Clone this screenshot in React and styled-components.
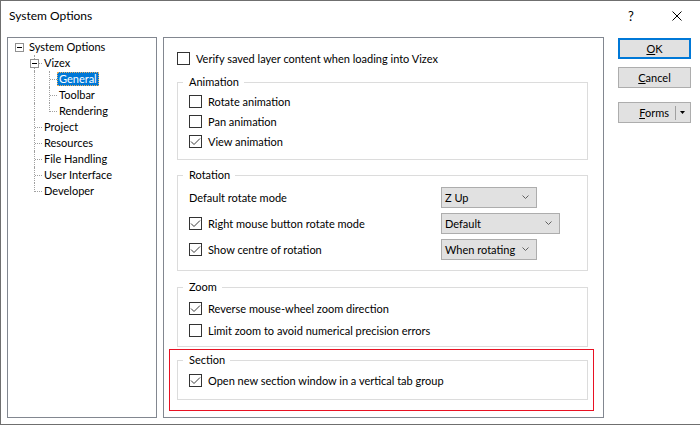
import React from 'react';
import styled, { createGlobalStyle, css } from 'styled-components';

const FONT = `Lato, "Liberation Sans", sans-serif`;

const Global = createGlobalStyle`
  html, body { margin: 0; padding: 0; background: #ffffff; }
  body { font-family: ${FONT}; font-size: 11px; color: #000; }
  * { box-sizing: border-box; }
`;

const Window = styled.div`
  width: 700px;
  height: 425px;
  background: #fff;
  border: 1px solid #6f6f6f;
  border-right: none;
  display: flex;
  flex-direction: column;
`;

const TitleBar = styled.div`
  height: 30px;
  display: flex;
  align-items: center;
  flex: 0 0 30px;
`;

const Title = styled.div`
  flex: 1;
  padding-left: 8px;
  font-size: 12px;
  line-height: 30px;
`;

const CaptionButton = styled.div`
  width: 46px;
  height: 30px;
  display: flex;
  align-items: center;
  justify-content: center;
  font-size: 13px;
`;

const Body = styled.div`
  flex: 1;
  display: flex;
  padding: 6px 0 6px 6px;
  min-height: 0;
`;

const TreePanel = styled.div`
  flex: 0 0 150px;
  border: 1px solid #828790;
  padding: 1px 0 0 4px;
  display: flex;
  flex-direction: column;
`;

const TreeRow = styled.div`
  height: 16px;
  display: flex;
  align-items: center;
`;

const Guide = styled.span`
  position: relative;
  flex: 0 0 15px;
  height: 16px;
  ${p => p.$v && css`
    &::before {
      content: '';
      position: absolute;
      left: 7px;
      top: 0;
      height: ${p.$v === 'full' ? 16 : 9}px;
      border-left: 1px dotted #a0a0a0;
    }
  `}
  ${p => p.$h && css`
    &::after {
      content: '';
      position: absolute;
      left: 8px;
      top: 8px;
      width: 7px;
      border-top: 1px dotted #a0a0a0;
    }
  `}
`;

const Expander = styled.span`
  position: absolute;
  z-index: 1;
  left: 3px;
  top: 4px;
  width: 9px;
  height: 9px;
  border: 1px solid #919191;
  background: #fff;
  &::after {
    content: '';
    position: absolute;
    left: 1px;
    top: 3px;
    width: 5px;
    height: 1px;
    background: #000;
  }
`;

const TreeLabel = styled.span`
  height: 14px;
  line-height: 12px;
  padding: 0 1px;
  border: 1px dotted transparent;
  white-space: nowrap;
  ${p => p.$selected && css`
    background: #0078d7;
    color: #fff;
    border-color: #e8b060;
  `}
`;

const MainPanel = styled.div`
  flex: 0 0 441px;
  margin-left: 6px;
  border: 1px solid #828790;
  padding: 10px 15px 0 13px;
  display: flex;
  flex-direction: column;
`;

const Row = styled.div`
  display: flex;
  align-items: center;
  height: ${p => p.$h || 20}px;
  white-space: nowrap;
`;

const Box = styled.span`
  flex: 0 0 13px;
  width: 13px;
  height: 13px;
  border: 1px solid #333;
  background: #fff;
  margin-right: 6px;
  display: flex;
  align-items: center;
  justify-content: center;
`;

const Group = styled.div`
  position: relative;
  border: 1px solid #dcdcdc;
  margin-top: ${p => p.$mt || 0}px;
  padding: ${p => p.$pt}px 10px ${p => p.$pb}px 11px;
`;

const Legend = styled.span`
  position: absolute;
  top: -9px;
  left: 5px;
  padding: 0 5px 0 6px;
  background: #fff;
  line-height: 16px;
`;

const Highlight = styled.div`
  border: 1px solid #e81123;
  margin: 2px -6px 0 -8px;
  padding: 10px 5px 10px 7px;
`;

const LabelCell = styled.div`
  flex: 0 0 252px;
  display: flex;
  align-items: center;
`;

const Select = styled.div`
  width: ${p => p.$w}px;
  height: 21px;
  border: 1px solid #adadad;
  background: #e1e1e1;
  display: flex;
  align-items: center;
  justify-content: space-between;
  padding: 0 7px 0 3px;
`;

const ButtonColumn = styled.div`
  margin-left: 14px;
  margin-top: 1px;
  display: flex;
  flex-direction: column;
  width: 73px;
`;

const Button = styled.div`
  height: 21px;
  margin-top: ${p => p.$mt || 0}px;
  background: #e1e1e1;
  border: ${p => (p.$default ? '2px solid #0078d7' : '1px solid #adadad')};
  display: flex;
  align-items: center;
  justify-content: center;
`;

const SplitButton = styled(Button)`
  justify-content: flex-end;
  padding-right: 5px;
`;

const Separator = styled.span`
  width: 1px;
  height: 14px;
  background: #a0a0a0;
  margin: 0 4px 0 6px;
`;

const Check = () => (
  <svg width="11" height="11" viewBox="0 0 11 11">
    <polyline points="1,5.5 4,8.5 10,2.5" fill="none" stroke="#3a3a3a" strokeWidth="1" />
  </svg>
);

const Checkbox = ({ checked }) => <Box>{checked && <Check />}</Box>;

const Chevron = () => (
  <svg width="7" height="5" viewBox="0 0 7 5">
    <polyline points="0.5,0.5 3.5,3.5 6.5,0.5" fill="none" stroke="#606060" strokeWidth="1" />
  </svg>
);

const CheckRow = ({ checked, children, h }) => (
  <Row $h={h}>
    <Checkbox checked={checked} />
    <span>{children}</span>
  </Row>
);

const tree = [
  { label: 'System Options', cols: [{ box: true }] },
  { label: 'Vizex', cols: [{}, { v: 'full', h: true, box: true }] },
  { label: 'General', selected: true, cols: [{}, { v: 'full' }, { v: 'full', h: true }] },
  { label: 'Toolbar', cols: [{}, { v: 'full' }, { v: 'full', h: true }] },
  { label: 'Rendering', cols: [{}, { v: 'full' }, { v: 'top', h: true }] },
  { label: 'Project', cols: [{}, { v: 'full', h: true }] },
  { label: 'Resources', cols: [{}, { v: 'full', h: true }] },
  { label: 'File Handling', cols: [{}, { v: 'full', h: true }] },
  { label: 'User Interface', cols: [{}, { v: 'full', h: true }] },
  { label: 'Developer', cols: [{}, { v: 'top', h: true }] },
];

export default function App() {
  return (
    <>
      <Global />
      <Window>
        <TitleBar>
          <Title>System Options</Title>
          <CaptionButton>?</CaptionButton>
          <CaptionButton>
            <svg width="10" height="10" viewBox="0 0 10 10">
              <path d="M0.5 0.5 L9.5 9.5 M9.5 0.5 L0.5 9.5" stroke="#000" strokeWidth="1" />
            </svg>
          </CaptionButton>
        </TitleBar>
        <Body>
          <TreePanel>
            {tree.map(item => (
              <TreeRow key={item.label}>
                {item.cols.map((c, i) => (
                  <Guide key={i} $v={c.v} $h={c.h}>
                    {c.box && <Expander />}
                  </Guide>
                ))}
                <TreeLabel $selected={item.selected}>{item.label}</TreeLabel>
              </TreeRow>
            ))}
          </TreePanel>

          <MainPanel>
            <CheckRow>Verify saved layer content when loading into Vizex</CheckRow>

            <Group $mt={14} $pt={8} $pb={8}>
              <Legend>Animation</Legend>
              <CheckRow>Rotate animation</CheckRow>
              <CheckRow>Pan animation</CheckRow>
              <CheckRow checked>View animation</CheckRow>
            </Group>

            <Group $mt={15} $pt={8} $pb={8}>
              <Legend>Rotation</Legend>
              <Row $h={26}>
                <LabelCell>Default rotate mode</LabelCell>
                <Select $w={96}><span>Z Up</span><Chevron /></Select>
              </Row>
              <Row $h={26}>
                <LabelCell><Checkbox checked /><span>Right mouse button rotate mode</span></LabelCell>
                <Select $w={119}><span>Default</span><Chevron /></Select>
              </Row>
              <Row $h={26}>
                <LabelCell><Checkbox checked /><span>Show centre of rotation</span></LabelCell>
                <Select $w={96}><span>When rotating</span><Chevron /></Select>
              </Row>
            </Group>

            <Group $mt={16} $pt={9} $pb={5}>
              <Legend>Zoom</Legend>
              <CheckRow checked h={22}>Reverse mouse-wheel zoom direction</CheckRow>
              <CheckRow h={22}>Limit zoom to avoid numerical precision errors</CheckRow>
            </Group>

            <Highlight>
              <Group $pt={9} $pb={9}>
                <Legend>Section</Legend>
                <CheckRow checked>Open new section window in a vertical tab group</CheckRow>
              </Group>
            </Highlight>
          </MainPanel>

          <ButtonColumn>
            <Button $default><span><u>O</u>K</span></Button>
            <Button $mt={8}><span><u>C</u>ancel</span></Button>
            <SplitButton $mt={14}>
              <span><u>F</u>orms</span>
              <Separator />
              <svg width="5" height="3" viewBox="0 0 5 3"><path d="M0 0 H5 L2.5 3 Z" fill="#000" /></svg>
            </SplitButton>
          </ButtonColumn>
        </Body>
      </Window>
    </>
  );
}
